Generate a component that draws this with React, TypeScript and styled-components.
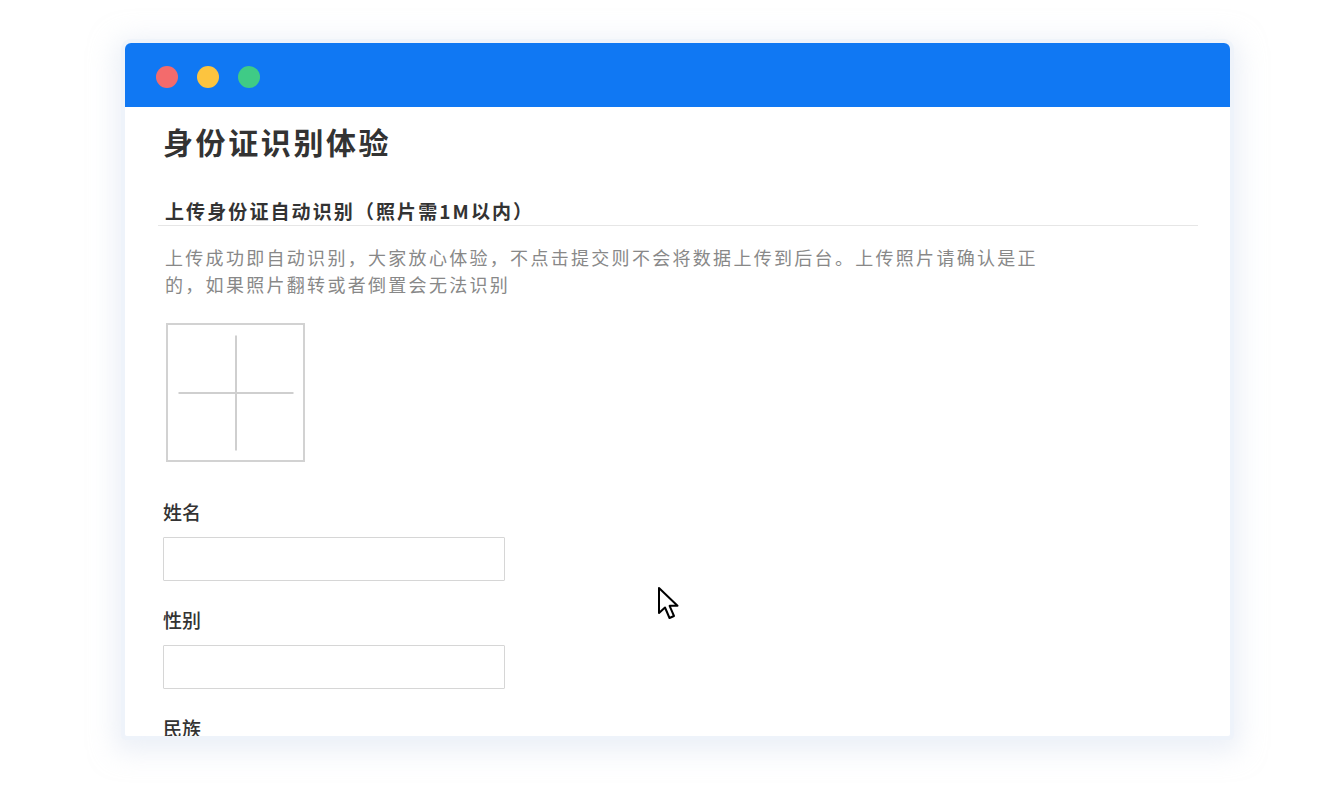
import React from "react";
import styled, { createGlobalStyle } from "styled-components";

const GlobalStyle = createGlobalStyle`
  html, body {
    margin: 0;
    padding: 0;
    background: #fff;
    font-family: "Noto Sans CJK SC", "Noto Sans", sans-serif;
  }
`;

const fields = ["姓名", "性别", "民族"];

function App() {
  return (
    <Page>
      <GlobalStyle />
      <Window>
        <TitleBar>
          <Dot color="#f36b6c" />
          <Dot color="#fcc43f" />
          <Dot color="#3fcb86" />
        </TitleBar>
        <Content>
          <Title>身份证识别体验</Title>
          <SectionHead>上传身份证自动识别（照片需1M以内）</SectionHead>
          <Desc>
            上传成功即自动识别，大家放心体验，不点击提交则不会将数据上传到后台。上传照片请确认是正的，如果照片翻转或者倒置会无法识别
          </Desc>
          <Upload />
          <FieldList>
            {fields.map((f) => (
              <Field key={f}>
                <Label>{f}</Label>
                <Input type="text" />
              </Field>
            ))}
          </FieldList>
        </Content>
      </Window>
      <Cursor width="26" height="36" viewBox="0 0 26 36">
        <path
          d="M2 2 L2 27 L8 21.5 L12.5 32 L17 30 L12.6 19.8 L20.5 19.8 Z"
          fill="#fff"
          stroke="#000"
          strokeWidth="2"
          strokeLinejoin="round"
        />
      </Cursor>
    </Page>
  );
}

export default App;

const Page = styled.div`
  position: relative;
  width: 1340px;
  height: 785px;
  padding: 43px 0 0 125px;
  box-sizing: border-box;
  overflow: hidden;
`;

const Window = styled.div`
  width: 1105px;
  height: 693px;
  background: #fff;
  border-radius: 6px 6px 2px 2px;
  overflow: hidden;
  box-shadow: 0 0 0 4px rgba(238, 242, 250, 0.8),
    0 6px 26px 10px rgba(218, 226, 240, 0.5);
`;

const TitleBar = styled.div`
  height: 64px;
  box-sizing: border-box;
  padding: 4px 0 0 31px;
  background: #1078f3;
  display: flex;
  align-items: center;
  gap: 19px;
`;

const Dot = styled.span<{ color: string }>`
  width: 22px;
  height: 22px;
  border-radius: 50%;
  background: ${(p) => p.color};
`;

const Content = styled.div`
  padding: 0 32px 0 33px;
  display: flex;
  flex-direction: column;
  align-items: flex-start;
`;

const Title = styled.h1`
  margin: 14px 0 0;
  padding-left: 5px;
  font-size: 30px;
  line-height: 40px;
  font-weight: 700;
  letter-spacing: 2.6px;
  color: #333;
`;

const SectionHead = styled.h2`
  align-self: stretch;
  margin: 35px 0 0;
  padding-left: 7px;
  font-size: 19px;
  line-height: 29px;
  font-weight: 700;
  letter-spacing: 2.1px;
  color: #333;
  border-bottom: 1px solid #e6e6e6;
`;

const Desc = styled.p`
  margin: 18px 0 0;
  padding-left: 7px;
  width: 880px;
  font-size: 18px;
  line-height: 27px;
  letter-spacing: 2.3px;
  color: #888;
`;

const Upload = styled.div`
  position: relative;
  margin: 25px 0 0 8px;
  width: 135px;
  height: 135px;
  border: 2px solid #d2d2d2;

  &::before,
  &::after {
    content: "";
    position: absolute;
    background: #cfcfcf;
    left: 50%;
    top: 50%;
    transform: translate(-50%, -50%);
  }
  &::before {
    width: 115px;
    height: 2px;
  }
  &::after {
    width: 2px;
    height: 115px;
  }
`;

const FieldList = styled.div`
  display: flex;
  flex-direction: column;
  gap: 26px;
  margin: 37px 0 0 5px;
`;

const Field = styled.div`
  display: flex;
  flex-direction: column;
`;

const Label = styled.label`
  font-size: 19px;
  line-height: 26px;
  font-weight: 500;
  color: #333;
`;

const Input = styled.input`
  margin-top: 12px;
  width: 342px;
  height: 44px;
  box-sizing: border-box;
  border: 1px solid #d6d6d6;
  border-radius: 1px;
  outline: none;
  font-size: 16px;
  padding: 0 10px;
`;

const Cursor = styled.svg`
  position: absolute;
  left: 657px;
  top: 586px;
`;
